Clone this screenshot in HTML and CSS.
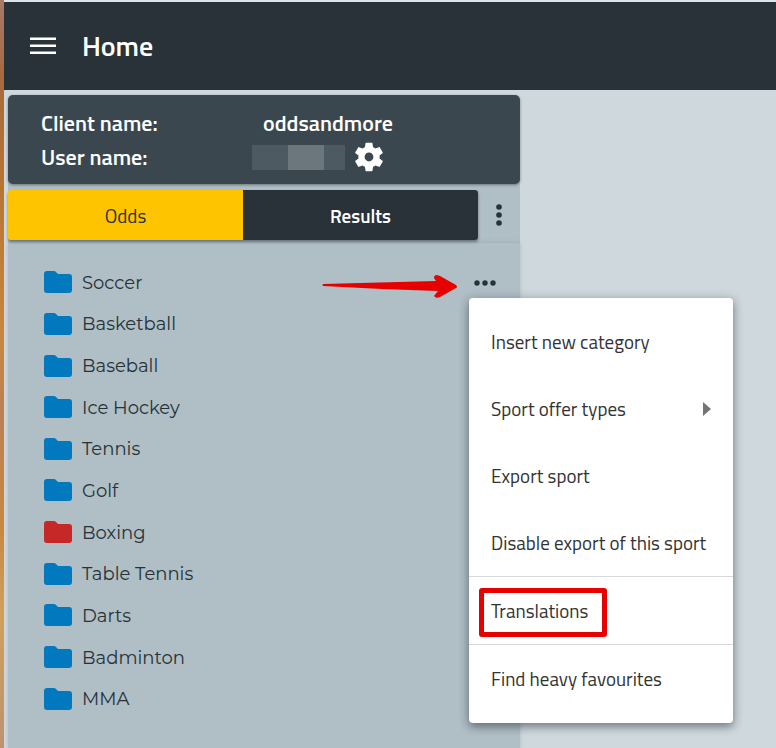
FILE: index.html
```html
<!DOCTYPE html>
<html lang="en">
<head>
<meta charset="utf-8">
<title>Home</title>
<link rel="stylesheet" href="styles.css">
</head>
<body>
<svg class="sprite" aria-hidden="true">
  <symbol id="folder" viewBox="0 0 28 23"><path d="M3 0h7q1 0 2 1l2 2h11q3 0 3 3v13q0 3-3 3H3q-3 0-3-3V3q0-3 3-3z"/></symbol>
</svg>
<div class="desktop-edge"></div>
<div class="app">
  <header class="topbar">
    <button class="icon-button burger" aria-label="Open navigation">
      <svg width="26" height="18" viewBox="0 0 26 18"><path d="M0 0.500h26v2.500H0zM0 7.500h26v2.500H0zM0 14.500h26v2.500H0z"/></svg>
    </button>
    <h1 class="title">Home</h1>
  </header>
  <div class="content">
    <aside class="sidebar">
      <section class="account">
        <dl class="details">
          <dt>Client name:</dt>
          <dd class="client">oddsandmore</dd>
          <dt>User name:</dt>
          <dd class="user">
            <span class="redacted"></span>
            <button class="icon-button gear" aria-label="Settings">
              <svg width="34" height="34" viewBox="0 0 24 24"><path d="M19.43 12.98c.04-.32.07-.64.07-.98s-.03-.66-.07-.98l2.11-1.65c.19-.15.24-.42.12-.64l-2-3.46c-.12-.22-.39-.3-.61-.22l-2.49 1c-.52-.4-1.08-.73-1.69-.98l-.38-2.65C14.46 2.18 14.25 2 14 2h-4c-.25 0-.46.18-.49.42l-.38 2.65c-.61.25-1.17.59-1.69.98l-2.49-1c-.23-.09-.49 0-.61.22l-2 3.46c-.13.22-.07.49.12.64l2.11 1.65c-.04.32-.07.65-.07.98s.03.66.07.98l-2.11 1.65c-.19.15-.24.42-.12.64l2 3.46c.12.22.39.3.61.22l2.49-1c.52.4 1.08.73 1.69.98l.38 2.65c.03.24.24.42.49.42h4c.25 0 .46-.18.49-.42l.38-2.65c.61-.25 1.17-.59 1.69-.98l2.49 1c.23.09.49 0 .61-.22l2-3.46c.12-.22.07-.49-.12-.64l-2.11-1.65zM12 15.100c-1.710 0-3.100-1.390-3.100-3.100s1.390-3.100 3.100-3.100 3.100 1.390 3.100 3.100-1.390 3.100-3.100 3.100z"/></svg>
            </button>
          </dd>
        </dl>
      </section>
      <div class="toolbar">
        <div class="tabs">
          <button class="tab active">Odds</button>
          <button class="tab">Results</button>
        </div>
        <button class="icon-button more" aria-label="More options">
          <svg width="6" height="22" viewBox="0 0 6 22"><circle cx="3" cy="3" r="2.800"/><circle cx="3" cy="11" r="2.800"/><circle cx="3" cy="19" r="2.800"/></svg>
        </button>
      </div>
      <nav class="tree">
        <ul class="sports">
          <li class="sport">
            <a href="#soccer"><svg class="folder"><use href="#folder"/></svg>Soccer</a>
            <svg class="arrow" width="136" height="26" viewBox="0 0 136 26"><path d="M1 10L114 7L112 4Q112 1 115 1L118 2L134 11Q136 13 134 14L118 23Q114 25 112 22L116 17L60 15L1 12Q0 11 1 10z"/></svg>
            <button class="icon-button row-more" aria-label="Soccer options">
              <svg width="22" height="6" viewBox="0 0 22 6"><circle cx="3" cy="3" r="2.7"/><circle cx="11" cy="3" r="2.7"/><circle cx="19" cy="3" r="2.7"/></svg>
            </button>
            <div class="menu">
              <button class="item">Insert new category</button>
              <button class="item">Sport offer types<svg width="8" height="14" viewBox="0 0 8 14"><path d="M0 0L8 7L0 14z"/></svg></button>
              <button class="item">Export sport</button>
              <button class="item">Disable export of this sport</button>
              <button class="item ruled marked">Translations</button>
              <button class="item ruled">Find heavy favourites</button>
            </div>
          </li>
          <li class="sport"><a href="#basketball"><svg class="folder"><use href="#folder"/></svg>Basketball</a></li>
          <li class="sport"><a href="#baseball"><svg class="folder"><use href="#folder"/></svg>Baseball</a></li>
          <li class="sport"><a href="#ice-hockey"><svg class="folder"><use href="#folder"/></svg>Ice Hockey</a></li>
          <li class="sport"><a href="#tennis"><svg class="folder"><use href="#folder"/></svg>Tennis</a></li>
          <li class="sport"><a href="#golf"><svg class="folder"><use href="#folder"/></svg>Golf</a></li>
          <li class="sport"><a href="#boxing"><svg class="folder disabled"><use href="#folder"/></svg>Boxing</a></li>
          <li class="sport"><a href="#table-tennis"><svg class="folder"><use href="#folder"/></svg>Table Tennis</a></li>
          <li class="sport"><a href="#darts"><svg class="folder"><use href="#folder"/></svg>Darts</a></li>
          <li class="sport"><a href="#badminton"><svg class="folder"><use href="#folder"/></svg>Badminton</a></li>
          <li class="sport"><a href="#mma"><svg class="folder"><use href="#folder"/></svg>MMA</a></li>
        </ul>
      </nav>
    </aside>
    <main class="workspace"></main>
  </div>
</div>
</body>
</html>
```
FILE: styles.css
```css
*, *::after { box-sizing: border-box; }

body {
  margin: 0;
  display: flex;
  min-height: 100vh;
  background: #cfd8dd;
  color: #263238;
  font-family: "Titillium Web", Roboto, sans-serif;
  font-size: 19px;
}

button {
  margin: 0;
  padding: 0;
  border: 0;
  background: none;
  color: inherit;
  font: inherit;
  cursor: pointer;
}

svg { display: block; fill: currentColor; }

.sprite { position: absolute; width: 0; height: 0; }

.desktop-edge {
  flex: 0 0 4px;
  background: linear-gradient(#a9796a, #a8693e 10%, #b87531 25%, #c8863e 45%, #bd8055 55%, #c8863e 70%, #d0a05a 82%, #bd9370);
}

.app {
  flex: 1;
  min-width: 0;
  display: flex;
  flex-direction: column;
  border-top: 2px solid #dce4e8;
}

.topbar {
  display: flex;
  align-items: center;
  gap: 26px;
  height: 88px;
  padding: 0 26px;
  background: #293238;
  color: #fff;
}

.title { margin: 0; font-size: 28px; font-weight: 600; line-height: 32px; }

.content { flex: 1; display: flex; padding: 0 0 0 4px; }

.sidebar {
  flex: 0 0 512px;
  display: flex;
  flex-direction: column;
  padding-top: 5px;
  background: linear-gradient(#cfd8dd 12px, #b0bec5 12px);
}

.workspace { flex: 1; }

.account {
  padding: 11px 33px 10px;
  border-radius: 5px;
  background: #3a474f;
  color: #fff;
  box-shadow: 0 1px 3px rgba(0, 0, 0, 0.4);
}

.details {
  display: grid;
  grid-template-columns: 211px 1fr;
  grid-auto-rows: 34px;
  align-items: center;
  margin: 0;
  font-size: 22px;
  font-weight: 600;
}

.details dd { margin: 0; }
.client { padding-left: 11px; }
.user { display: flex; align-items: center; gap: 7px; }

.redacted {
  width: 93px;
  height: 25px;
  background: linear-gradient(90deg, #4d5a62 36px, #6c777d 36px, #6c777d 72px, #4d5a62 72px);
}

.toolbar {
  display: flex;
  margin-top: 6px;
  padding-bottom: 3px;
}

.tabs {
  flex: 1;
  display: flex;
  height: 50px;
  border-radius: 3px;
  overflow: hidden;
  box-shadow: 0 2px 3px rgba(0, 0, 0, 0.4);
}

.tab { flex: 1; background: #293238; color: #fff; font-weight: 600; }
.tab.active { background: #ffc400; color: #293238; font-weight: 400; }

.more {
  flex: 0 0 42px;
  display: flex;
  align-items: center;
  justify-content: center;
}

.tree {
  flex: 1;
  padding: 19px 24px 27px 36px;
  box-shadow: 0 0 4px rgba(96, 125, 139, 0.3);
}

.sports {
  display: grid;
  grid-auto-rows: 1fr;
  height: 458px;
  margin: 0;
  padding: 0;
  list-style: none;
  font-family: Montserrat, Inter, sans-serif;
  font-size: 18px;
}

.sport { position: relative; display: flex; align-items: center; }
.sport a { flex: 1; display: flex; align-items: center; gap: 10px; color: inherit; text-decoration: none; }
.folder { width: 28px; height: 23px; color: #0279bf; }
.folder.disabled { color: #c62828; }

.arrow { position: absolute; left: 278px; top: 12px; color: #e60000; }

.menu {
  position: absolute;
  z-index: 1;
  left: 425px;
  top: 36px;
  width: 264px;
  padding: 10px 0 11px;
  border-radius: 4px;
  background: #fff;
  color: #333;
  font-family: "Titillium Web", Roboto, sans-serif;
  font-size: 19px;
  box-shadow: 0 4px 8px rgba(38, 50, 56, 0.45), 0 1px 12px rgba(38, 50, 56, 0.2);
}

.item {
  display: flex;
  align-items: center;
  justify-content: space-between;
  width: 100%;
  height: 67px;
  padding: 0 22px;
  white-space: nowrap;
}

.item svg { color: #757575; }
.ruled { height: 68px; border-top: 1px solid #d9d9d9; }
.marked { position: relative; }

.marked::after {
  content: "";
  position: absolute;
  left: 10px;
  top: 11px;
  width: 128px;
  height: 49px;
  border: 5px solid #e60000;
  border-radius: 3px;
}
```
